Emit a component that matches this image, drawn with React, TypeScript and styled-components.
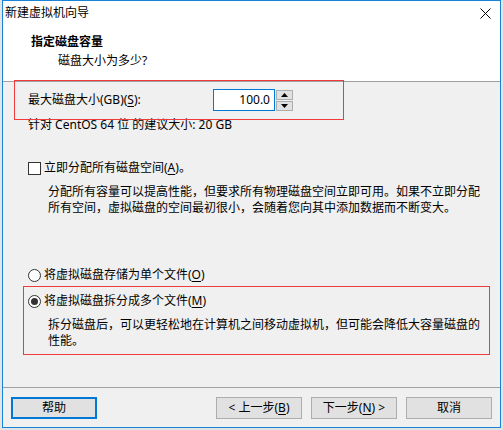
import React from 'react';
import styled, { createGlobalStyle } from 'styled-components';

const GlobalStyle = createGlobalStyle`
  html, body {
    margin: 0;
    padding: 0;
    background: #e4e4e4;
  }
  body {
    font-family: "Noto Sans", "Noto Sans CJK SC", "Microsoft YaHei", sans-serif;
    font-size: 12px;
    color: #000;
  }
`;

const Window = styled.div`
  position: relative;
  box-sizing: border-box;
  width: 499px;
  height: 428px;
  margin-left: 2px;
  border: 1px solid #1883d7;
  background: #f0f0f0;
  display: flex;
  flex-direction: column;
`;

const Top = styled.div`
  background: #fff;
`;

const TitleBar = styled.div`
  height: 24px;
  display: flex;
  align-items: center;
  justify-content: space-between;
  padding: 0 9px 0 2px;
  line-height: 16px;
`;

const Header = styled.div`
  box-sizing: border-box;
  height: 56px;
  padding-top: 9px;
  line-height: 16px;
`;

const Heading = styled.div`
  padding-left: 28px;
  font-weight: 700;
`;

const SubHeading = styled.div`
  margin-top: 3px;
  padding-left: 55px;
`;

const Rule = styled.div`
  height: 1px;
  background: #a0a0a0;
`;

const Body = styled.div`
  flex: 1;
  padding-left: 25px;
  line-height: 16px;
`;

const SizeRow = styled.div`
  margin-top: 7px;
  height: 22px;
  display: flex;
  align-items: center;
`;

const SizeLabel = styled.span`
  width: 185px;
`;

const NumberBox = styled.div`
  box-sizing: border-box;
  width: 62px;
  height: 22px;
  border: 1px solid #0078d7;
  background: #fff;
  text-align: right;
  padding-right: 4px;
  line-height: 20px;
`;

const Spin = styled.div`
  margin-left: 1px;
  display: flex;
  flex-direction: column;
  gap: 1px;
`;

const SpinButton = styled.div`
  box-sizing: border-box;
  width: 17px;
  height: 10px;
  border: 1px solid #adadad;
  background: #e1e1e1;
  display: flex;
  align-items: center;
  justify-content: center;
`;

const Text = styled.div<{ $top: number; $indent?: number }>`
  margin-top: ${(p) => p.$top}px;
  margin-left: ${(p) => p.$indent ?? 0}px;
  line-height: 16px;
  white-space: nowrap;
`;

const OptionRow = styled.div<{ $top: number }>`
  margin-top: ${(p) => p.$top}px;
  height: 16px;
  display: flex;
  align-items: center;
  gap: 3px;
`;

const CheckBox = styled.span`
  box-sizing: border-box;
  width: 13px;
  height: 13px;
  border: 1px solid #333;
  background: #fff;
`;

const Radio = styled.span<{ $on?: boolean }>`
  box-sizing: border-box;
  width: 13px;
  height: 13px;
  border: 1px solid #333;
  border-radius: 50%;
  background: #fff;
  display: flex;
  align-items: center;
  justify-content: center;

  &::after {
    content: '';
    display: ${(p) => (p.$on ? 'block' : 'none')};
    width: 7px;
    height: 7px;
    border-radius: 50%;
    background: #333;
  }
`;

const Key = styled.span`
  text-decoration: underline;
  text-underline-offset: 2px;
`;

const Footer = styled.div`
  display: flex;
  flex-direction: column;
`;

const ButtonRow = styled.div`
  display: flex;
  padding: 9px 8px 8px 8px;
  gap: 9px;
`;

const Button = styled.div<{ $focus?: boolean }>`
  box-sizing: border-box;
  width: 86px;
  height: 22px;
  border: ${(p) => (p.$focus ? '2px solid #0078d7' : '1px solid #adadad')};
  background: #e1e1e1;
  display: flex;
  align-items: center;
  justify-content: center;
  line-height: 16px;
`;

const Spacer = styled.div`
  flex: 1;
`;

const Mark = styled.div<{ $x: number; $y: number; $w: number; $h: number }>`
  position: absolute;
  left: ${(p) => p.$x}px;
  top: ${(p) => p.$y}px;
  width: ${(p) => p.$w}px;
  height: ${(p) => p.$h}px;
  box-sizing: border-box;
  border: 1px solid #ee3b3b;
  pointer-events: none;
`;

const Close = () => (
  <svg width="11" height="11" viewBox="0 0 11 11">
    <path d="M0.5 0.5 L10.5 10.5 M10.5 0.5 L0.5 10.5" stroke="#000" strokeWidth="1" />
  </svg>
);

const Arrow = ({ down }: { down?: boolean }) => (
  <svg width="7" height="4" viewBox="0 0 7 4">
    <path d={down ? 'M0 0 H7 L3.5 4 Z' : 'M0 4 H7 L3.5 0 Z'} fill="#000" />
  </svg>
);

export default function App() {
  return (
    <>
      <GlobalStyle />
      <Window>
        <Top>
          <TitleBar>
            <span>新建虚拟机向导</span>
            <Close />
          </TitleBar>
          <Header>
            <Heading>指定磁盘容量</Heading>
            <SubHeading>磁盘大小为多少?</SubHeading>
          </Header>
        </Top>
        <Rule />
        <Body>
          <SizeRow>
            <SizeLabel>
              最大磁盘大小(GB)(<Key>S</Key>):
            </SizeLabel>
            <NumberBox>100.0</NumberBox>
            <Spin>
              <SpinButton>
                <Arrow />
              </SpinButton>
              <SpinButton>
                <Arrow down />
              </SpinButton>
            </Spin>
          </SizeRow>
          <Text $top={6}>针对 CentOS 64 位 的建议大小: 20 GB</Text>

          <OptionRow $top={27}>
            <CheckBox />
            <span>
              立即分配所有磁盘空间(<Key>A</Key>)。
            </span>
          </OptionRow>
          <Text $top={8} $indent={20}>
            分配所有容量可以提高性能，但要求所有物理磁盘空间立即可用。如果不立即分配
            <br />
            所有空间，虚拟磁盘的空间最初很小，会随着您向其中添加数据而不断变大。
          </Text>

          <OptionRow $top={51}>
            <Radio />
            <span>
              将虚拟磁盘存储为单个文件(<Key>O</Key>)
            </span>
          </OptionRow>
          <OptionRow $top={10}>
            <Radio $on />
            <span>
              将虚拟磁盘拆分成多个文件(<Key>M</Key>)
            </span>
          </OptionRow>
          <Text $top={8} $indent={20}>
            拆分磁盘后，可以更轻松地在计算机之间移动虚拟机，但可能会降低大容量磁盘的
            <br />
            性能。
          </Text>
        </Body>
        <Footer>
          <Rule />
          <ButtonRow>
            <Button $focus>帮助</Button>
            <Spacer />
            <Button>
              &lt; 上一步(<Key>B</Key>)
            </Button>
            <Button>
              下一步(<Key>N</Key>) &gt;
            </Button>
            <Button>取消</Button>
          </ButtonRow>
        </Footer>
        <Mark $x={11} $y={79} $w={330} $h={40} />
        <Mark $x={20} $y={285} $w={467} $h={69} />
      </Window>
    </>
  );
}
